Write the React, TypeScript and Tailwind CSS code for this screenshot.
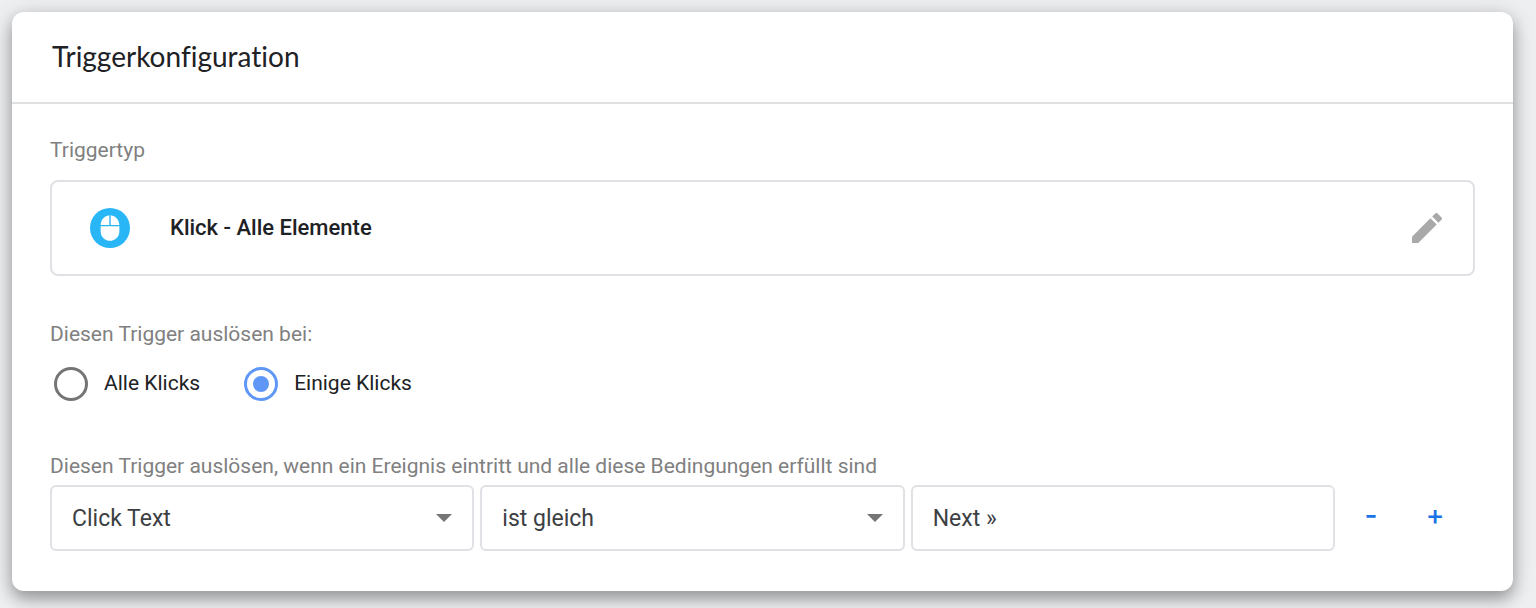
import React, { useState } from 'react';

interface SelectFieldProps {
  label: string;
  options: string[];
  value: string;
  onChange: (value: string) => void;
}

const SelectField: React.FC<SelectFieldProps> = ({ label, options, value, onChange }) => (
  <div className="grid items-center">
    <select
      aria-label={label}
      value={value}
      onChange={(e) => onChange(e.target.value)}
      className="col-start-1 row-start-1 h-[66px] w-full appearance-none rounded-md border-2 border-[#dfe1e5] bg-white px-5 pt-0.5 text-[23px] text-[#3c4043]"
    >
      {options.map((option) => (
        <option key={option}>{option}</option>
      ))}
    </select>
    <svg
      className="pointer-events-none col-start-1 row-start-1 mr-[22px] h-2 w-4 justify-self-end"
      viewBox="0 0 16 8"
      fill="#757575"
    >
      <path d="M0 0h16L8 8z" />
    </svg>
  </div>
);

interface RadioOptionProps {
  label: string;
  checked: boolean;
  onSelect: () => void;
}

const RadioOption: React.FC<RadioOptionProps> = ({ label, checked, onSelect }) => (
  <label className="flex items-start gap-4 text-[21px] leading-8 text-[#202124]">
    <input
      type="radio"
      name="trigger-filter"
      checked={checked}
      onChange={onSelect}
      className="grid size-[34px] appearance-none place-items-center rounded-full border-[3px] border-[#757575] before:size-4 before:rounded-full checked:border-[#5e97f6] checked:before:bg-[#5e97f6]"
    />
    {label}
  </label>
);

const App: React.FC = () => {
  const [filter, setFilter] = useState('some');
  const [variable, setVariable] = useState('Click Text');
  const [operator, setOperator] = useState('ist gleich');
  const [value, setValue] = useState('Next »');

  return (
    <div className="min-h-screen bg-[#eeeff1] pt-3 pr-[23px] pb-[18px] pl-3 font-['Roboto',sans-serif]">
      <section className="rounded-xl bg-white shadow-[0_8px_16px_rgba(0,0,0,0.32),0_2px_24px_rgba(0,0,0,0.12)]">
        <header className="border-b-2 border-[#dfe0e1] px-10 pt-6 pb-[26px]">
          <h1 className="font-['Lato',sans-serif] text-[28px] leading-10 text-[#202124] [font-variant-ligatures:none]">
            Triggerkonfiguration
          </h1>
        </header>

        <div className="px-[38px] pt-8 pb-10">
          <h2 className="text-[21px] leading-7 text-[#808080]">Triggertyp</h2>
          <div className="mt-4 flex h-24 items-center rounded-lg border-2 border-[#dfe1e5] pr-[26px] pl-[38px]">
            <span className="flex size-10 items-center justify-center rounded-full bg-[#29b6f6]">
              <svg className="size-7" viewBox="0 0 24 24" fill="white">
                <path d="M12.6 1.07V9.4H20c0-4.28-3.25-7.84-7.4-8.33zM4 15c0 4.42 3.58 8 8 8s8-3.58 8-8v-4.4H4V15zm7.4-13.93C7.25 1.56 4 5.12 4 9.4h7.4V1.07z" />
              </svg>
            </span>
            <span className="ml-10 flex-1 text-[22px] leading-8 font-medium text-[#202124]">
              Klick - Alle Elemente
            </span>
            <button type="button" aria-label="Triggertyp bearbeiten">
              <svg className="size-10" viewBox="0 0 24 24" fill="#a9a9a9">
                <path d="M3 17.25V21h3.75L17.81 9.94l-3.75-3.75L3 17.25zM20.71 7.04c.39-.39.39-1.02 0-1.41l-2.34-2.34c-.39-.39-1.02-.39-1.41 0l-1.83 1.83 3.75 3.75 1.83-1.83z" />
              </svg>
            </button>
          </div>

          <fieldset className="mt-11">
            <legend className="text-[21px] leading-7 text-[#808080]">
              Diesen Trigger auslösen bei:
            </legend>
            <div className="mt-[19px] flex gap-11 pl-1">
              <RadioOption label="Alle Klicks" checked={filter === 'all'} onSelect={() => setFilter('all')} />
              <RadioOption label="Einige Klicks" checked={filter === 'some'} onSelect={() => setFilter('some')} />
            </div>
          </fieldset>

          <h2 className="mt-[51px] text-[21px] leading-7 text-[#808080]">
            Diesen Trigger auslösen, wenn ein Ereignis eintritt und alle diese Bedingungen erfüllt sind
          </h2>
          <div className="mt-[5px] flex items-center">
            <div className="grid flex-1 grid-cols-3 gap-[6px]">
              <SelectField
                label="Variable"
                options={['Click Text', 'Click URL', 'Click ID']}
                value={variable}
                onChange={setVariable}
              />
              <SelectField
                label="Operator"
                options={['ist gleich', 'enthält', 'beginnt mit']}
                value={operator}
                onChange={setOperator}
              />
              <input
                type="text"
                aria-label="Wert"
                value={value}
                onChange={(e) => setValue(e.target.value)}
                className="h-[66px] min-w-0 rounded-md border-2 border-[#dfe1e5] px-5 text-[23px] text-[#3c4043]"
              />
            </div>
            <div className="mr-2 ml-1 flex pb-1.5 font-['Inter',sans-serif] text-[28px] leading-10 font-medium text-[#1a73e8]">
              <button type="button" aria-label="Bedingung entfernen" className="w-16">-</button>
              <button type="button" aria-label="Bedingung hinzufügen" className="w-16">+</button>
            </div>
          </div>
        </div>
      </section>
    </div>
  );
};

export default App;
